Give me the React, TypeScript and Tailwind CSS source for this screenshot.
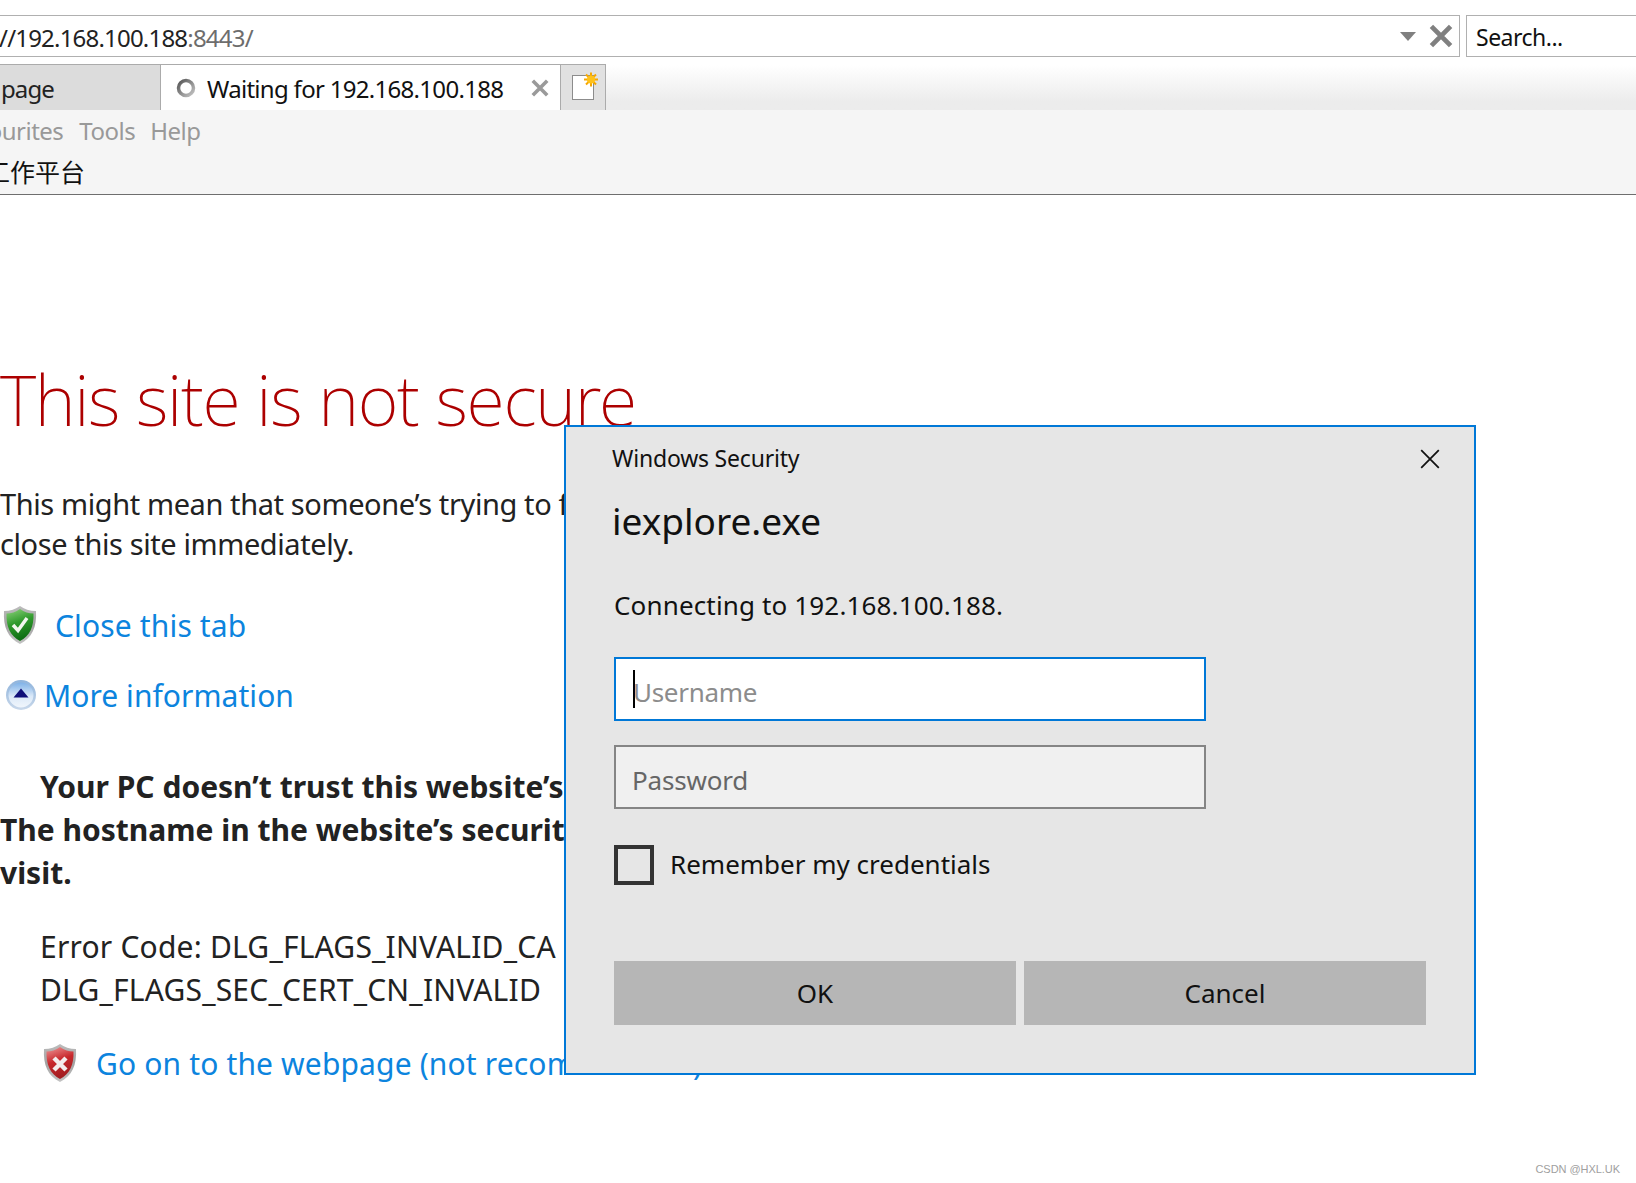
import React from "react";

function Shield({ kind }: { kind: "ok" | "bad" }) {
  const id = kind;
  const top = kind === "ok" ? "#8fd37c" : "#ef9a9a";
  const mid = kind === "ok" ? "#2f9a2c" : "#c8282c";
  const bot = kind === "ok" ? "#0f6e14" : "#a31e22";
  return (
    <svg width="36" height="40" viewBox="0 0 36 40" className="shrink-0">
      <defs>
        <linearGradient id={`rim-${id}`} x1="0" y1="0" x2="0" y2="1">
          <stop offset="0" stopColor="#bdbdbd" />
          <stop offset="0.5" stopColor="#a2a2a2" />
          <stop offset="1" stopColor="#c4c4c4" />
        </linearGradient>
        <linearGradient id={`fill-${id}`} x1="0" y1="0" x2="0.3" y2="1">
          <stop offset="0" stopColor={top} />
          <stop offset="0.5" stopColor={mid} />
          <stop offset="1" stopColor={bot} />
        </linearGradient>
      </defs>
      <path d="M18 1C14 4 8 6 2 6C1 22 6 33 18 39C30 33 35 22 34 6C28 6 22 4 18 1Z" fill={`url(#rim-${id})`} />
      <path d="M18 4C14 7 9 8.500 4.500 8.500C4 22 8.500 31 18 36C27.500 31 32 22 31.500 8.500C27 8.500 22 7 18 4Z" fill={`url(#fill-${id})`} />
      {kind === "ok" ? (
        <path d="M11 20L16 25.500L25 13" fill="none" stroke="#f2f6ee" strokeWidth="3.500" />
      ) : (
        <path d="M12 15L24 27M24 15L12 27" fill="none" stroke="#f4ecec" strokeWidth="4.500" />
      )}
    </svg>
  );
}

function UpCircle() {
  return (
    <svg width="32" height="32" viewBox="0 0 32 32" className="shrink-0">
      <defs>
        <linearGradient id="ring" x1="0" y1="0" x2="0" y2="1">
          <stop offset="0" stopColor="#8fb4dc" />
          <stop offset="1" stopColor="#c9d8ea" />
        </linearGradient>
        <linearGradient id="disc" x1="0" y1="0" x2="0" y2="1">
          <stop offset="0" stopColor="#7fb2e8" />
          <stop offset="0.55" stopColor="#dbe9f8" />
          <stop offset="1" stopColor="#f1f6fc" />
        </linearGradient>
      </defs>
      <circle cx="16" cy="16" r="15" fill="url(#ring)" />
      <circle cx="16" cy="16" r="12.500" fill="url(#disc)" />
      <path d="M16 9.500L23.500 18.500H8.500Z" fill="#0f0f78" />
    </svg>
  );
}

function Spinner() {
  return (
    <svg width="20" height="20" viewBox="0 0 20 20" className="shrink-0">
      <defs>
        <linearGradient id="spin" x1="0" y1="0" x2="1" y2="1">
          <stop offset="0" stopColor="#555" />
          <stop offset="1" stopColor="#c4c4c4" />
        </linearGradient>
      </defs>
      <circle cx="10" cy="10" r="7.500" fill="none" stroke="url(#spin)" strokeWidth="3.500" />
    </svg>
  );
}

function GrayX({ size, color, width }: { size: number; color: string; width: number }) {
  return (
    <svg width={size} height={size} viewBox="0 0 20 20" className="shrink-0">
      <path d="M2 2L18 18M18 2L2 18" stroke={color} strokeWidth={width} fill="none" />
    </svg>
  );
}

function NewTabIcon() {
  return (
    <svg width="32" height="32" viewBox="0 0 32 32">
      <rect x="3.500" y="6.500" width="21" height="24" fill="#fff" stroke="#8c8c8c" />
      <g stroke="#f6a800" strokeWidth="2">
        <path d="M22 3.500V17.500M15 10.500H29M17 5.500L27 15.500M27 5.500L17 15.500" />
      </g>
      <circle cx="22" cy="10.500" r="4" fill="#ffc21a" />
    </svg>
  );
}

export default function App() {
  return (
    <div className="relative w-[1636px] h-[1183px] overflow-hidden bg-white font-['Noto_Sans','Noto_Sans_CJK_SC',sans-serif] text-black">
      <header className="pt-[15px]">
        <div className="flex h-[42px] gap-[6px]">
          <div className="flex flex-1 items-center border border-l-0 border-[#b0b0b0] pr-[6px]">
            <span className="flex-1 pt-[3px] text-[24px] leading-[40px] tracking-[-0.8px] text-[#222] -ml-[1px]">
              //192.168.100.188<span className="text-[#6d6d6d]">:8443/</span>
            </span>
            <span className="mr-[14px] h-0 w-0 border-x-[8px] border-t-[9px] border-x-transparent border-t-[#808080]" />
            <span className="-ml-[1px]">
              <GrayX size={24} color="#808080" width={4} />
            </span>
          </div>
          <div className="flex w-[170px] items-center border border-r-0 border-[#b0b0b0] pl-[9px] pt-[2px] text-[23px] tracking-[-0.5px] text-[#111]">
            Search...
          </div>
        </div>
        <div className="h-[53px] bg-gradient-to-b from-white from-15% to-[#ececec] to-85% pt-[7px]">
          <div className="flex h-[46px]">
            <div className="flex w-[161px] items-center border-t border-r border-[#ababab] bg-[#dcdcdc] pl-[1px] pt-[2px] text-[24px] tracking-[-0.9px] text-[#222]">
              page
            </div>
            <div className="flex w-[399px] items-center border-t border-[#ababab] bg-white pl-[15px]">
              <Spinner />
              <span className="ml-[11px] pt-[2px] text-[24px] tracking-[-0.7px] text-[#111]">Waiting for 192.168.100.188</span>
              <span className="ml-[28px]">
                <GrayX size={18} color="#9a9a9a" width={4} />
              </span>
            </div>
            <div className="flex w-[46px] items-start border border-[#ababab] border-b-0 bg-[#e1e1e1] pl-[8px] pt-[4px]">
              <NewTabIcon />
            </div>
          </div>
        </div>
        <div className="h-[85px] border-b border-[#6e6e6e] bg-[#f5f5f5]">
          <div className="flex h-[42px] items-center gap-[15px] text-[24px] tracking-[-0.5px] text-[#999]">
            <span className="-ml-[24px]">vourites</span>
            <span className="ml-[1px]">Tools</span>
            <span>Help</span>
          </div>
          <div className="h-[40px] -ml-[15px] text-[25px] leading-[40px] text-[#111]">工作平台</div>
        </div>
      </header>

      <main>
        <h1 className="mt-[159px] h-[90px] whitespace-nowrap text-[70px] leading-[90px] font-extralight tracking-[-1.3px] text-[#ac0000]">
          This site is not secure
        </h1>
        <p className="mt-[40px] whitespace-nowrap text-[29px] leading-[40px] tracking-[-0.4px] text-[#222]">
          This might mean that someone’s trying to fool you or steal any info you send to
          <br />
          close this site immediately.
        </p>
        <a className="mt-[41px] flex h-[40px] items-center pl-[2px] text-[30px] tracking-[0.15px] text-[#0c84de]">
          <Shield kind="ok" />
          <span className="ml-[17px]">Close this tab</span>
        </a>
        <a className="mt-[30px] flex h-[40px] items-center pl-[5px] text-[30px] tracking-[0.05px] text-[#0c84de]">
          <UpCircle />
          <span className="ml-[7px]">More information</span>
        </a>
        <div className="mt-[50px] whitespace-nowrap text-[30px] leading-[43px] font-bold tracking-[0px] text-[#222]">
          <p className="pl-[40px]">Your PC doesn’t trust this website’s security certificate.</p>
          <p>The hostname in the website’s security certificate differs from the website you want to</p>
          <p>visit.</p>
        </div>
        <p className="mt-[31px] pl-[40px] whitespace-nowrap text-[30px] leading-[43px] tracking-[0.2px] text-[#222]">
          Error Code: DLG_FLAGS_INVALID_CA
          <br />
          DLG_FLAGS_SEC_CERT_CN_INVALID
        </p>
        <a className="mt-[32px] flex h-[40px] items-center pl-[42px] text-[30px] tracking-[0.15px] text-[#0c84de]">
          <Shield kind="bad" />
          <span className="ml-[18px]">Go on to the webpage (not recommended)</span>
        </a>
      </main>

      <div className="absolute left-[564px] top-[425px] flex h-[650px] w-[912px] flex-col border-2 border-[#0078d7] bg-[#e6e6e6] pl-[46px] text-[#111]">
        <div className="mt-[13px] flex h-[36px] items-center text-[23px] tracking-[-0.2px]">
          Windows Security
          <span className="absolute right-[33px] top-[21px]">
            <GrayX size={22} color="#111" width={1.600} />
          </span>
        </div>
        <div className="mt-[22px] h-[46px] text-[37px] leading-[46px]">iexplore.exe</div>
        <div className="mt-[41px] ml-[2px] h-[40px] text-[26px] leading-[40px] tracking-[0.15px]">Connecting to 192.168.100.188.</div>
        <div className="ml-[2px] mt-[32px] flex h-[64px] w-[592px] items-center border-2 border-[#0078d7] bg-white pl-[17px] text-[26px] tracking-[-0.3px] text-[#8c8c8c]">
          <span className="-mr-[2px] h-[38px] w-[2px] bg-black" />
          <span className="pt-[6px]">Username</span>
        </div>
        <div className="ml-[2px] mt-[24px] flex h-[64px] w-[592px] items-center border-2 border-[#858585] bg-[#f0f0f0] pl-[16px] pt-[6px] text-[26px] tracking-[-0.2px] text-[#666]">
          Password
        </div>
        <div className="ml-[2px] mt-[36px] flex h-[40px] items-center text-[26px]">
          <span className="h-[40px] w-[40px] border-4 border-[#333]" />
          <span className="ml-[16px] -mt-[2px]">Remember my credentials</span>
        </div>
        <div className="ml-[2px] mt-[76px] flex gap-[8px] text-[26px]">
          <div className="flex h-[64px] w-[402px] items-center justify-center bg-[#b6b6b6]">OK</div>
          <div className="flex h-[64px] w-[402px] items-center justify-center bg-[#b6b6b6]">Cancel</div>
        </div>
      </div>

      <div className="absolute right-[16px] bottom-[6px] font-['Liberation_Sans',sans-serif] text-[11px] tracking-[-0.05px] text-[#a0a0a0]">
        CSDN @HXL.UK
      </div>
    </div>
  );
}
